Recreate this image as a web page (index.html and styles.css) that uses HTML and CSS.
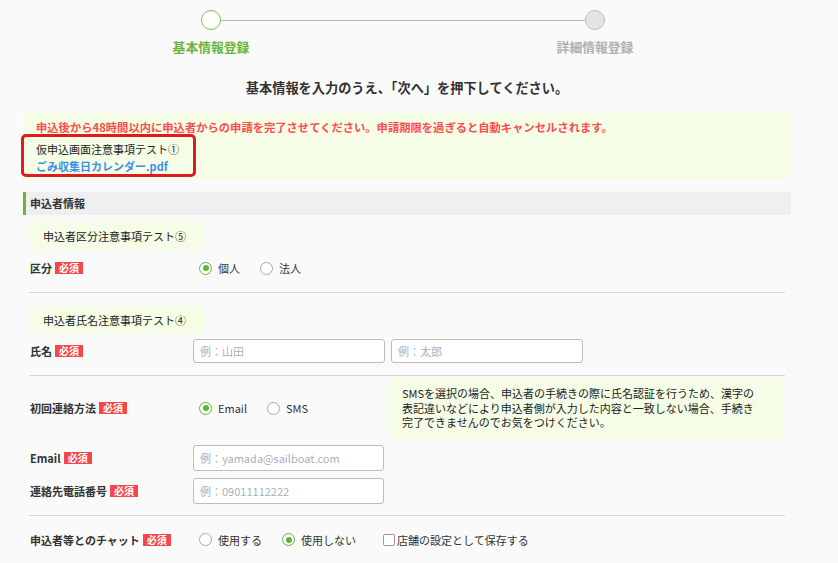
FILE: index.html
```html
<!DOCTYPE html>
<html lang="ja">
<head>
<meta charset="utf-8">
<link rel="stylesheet" href="styles.css">
</head>
<body>
<div class="page">
  <div class="stepper">
    <div class="track">
      <span class="dot dot-active"></span>
      <span class="track-line"></span>
      <span class="dot dot-off"></span>
    </div>
    <div class="step-labels">
      <span class="step-label active">基本情報登録</span>
      <span class="step-label">詳細情報登録</span>
    </div>
  </div>

  <h1 class="title">基本情報を入力のうえ、「次へ」を押下してください。</h1>

  <div class="notice">
    <p class="warn">申込後から48時間以内に申込者からの申請を完了させてください。申請期限を過ぎると自動キャンセルされます。</p>
    <p class="note-line">仮申込画面注意事項テスト①</p>
    <p class="note-line"><a class="link" href="#">ごみ収集日カレンダー.pdf</a></p>
    <span class="highlight"></span>
  </div>

  <div class="section-head">申込者情報</div>

  <div class="sub-notice">申込者区分注意事項テスト⑤</div>
  <div class="row row-kubun">
    <div class="label">区分<span class="req">必須</span></div>
    <div class="controls">
      <label class="opt"><span class="radio on"></span>個人</label>
      <label class="opt"><span class="radio"></span>法人</label>
    </div>
  </div>
  <div class="divider d1"></div>

  <div class="sub-notice sn2">申込者氏名注意事項テスト④</div>
  <div class="row row-name">
    <div class="label">氏名<span class="req">必須</span></div>
    <div class="controls">
      <div class="input">例：山田</div>
      <div class="input">例：太郎</div>
    </div>
  </div>
  <div class="divider d2"></div>

  <div class="row row-contact">
    <div class="label">初回連絡方法<span class="req">必須</span></div>
    <div class="controls">
      <label class="opt"><span class="radio on"></span>Email</label>
      <label class="opt"><span class="radio"></span>SMS</label>
      <div class="sms-note">SMSを選択の場合、申込者の手続きの際に氏名認証を行うため、漢字の表記違いなどにより申込者側が入力した内容と一致しない場合、手続き完了できませんのでお気をつけください。</div>
    </div>
  </div>
  <div class="row row-email">
    <div class="label">Email<span class="req">必須</span></div>
    <div class="controls">
      <div class="input input-tall">例：yamada@sailboat.com</div>
    </div>
  </div>
  <div class="row row-tel">
    <div class="label">連絡先電話番号<span class="req">必須</span></div>
    <div class="controls">
      <div class="input input-tall">例：09011112222</div>
    </div>
  </div>
  <div class="divider d3"></div>

  <div class="row row-chat">
    <div class="label label-chat">申込者等とのチャット<span class="req">必須</span></div>
    <div class="controls">
      <label class="opt"><span class="radio"></span>使用する</label>
      <label class="opt"><span class="radio on"></span>使用しない</label>
      <label class="opt chk-opt"><span class="checkbox"></span>店舗の設定として保存する</label>
    </div>
  </div>
</div>
</body>
</html>
```

FILE: styles.css
```css
* { box-sizing: border-box; }
html, body {
  margin: 0;
  padding: 0;
  background: #fafafa;
}
body {
  font-family: "Noto Sans CJK JP", "Noto Sans", sans-serif;
  font-size: 11px;
  color: #333;
  width: 838px;
  height: 563px;
  overflow: hidden;
}
p { margin: 0; }

.page {
  margin-left: 23px;
  width: 768px;
}

/* stepper */
.stepper { padding-top: 10px; }
.track {
  display: flex;
  align-items: center;
  margin-left: 178px;
  height: 20px;
}
.dot {
  width: 20px;
  height: 20px;
  border-radius: 50%;
  flex: none;
}
.dot-active { background: #fff; border: 1.5px solid #7cc34c; }
.dot-off { background: #e4e4e4; border: 1.5px solid #bdbdbd; }
.track-line {
  width: 364px;
  height: 1px;
  background: #b5b5b5;
  flex: none;
}
.step-labels {
  display: flex;
  margin-left: 138px;
  margin-top: 9px;
  gap: 284px;
}
.step-label {
  width: 100px;
  text-align: center;
  font-size: 12.8px;
  font-weight: bold;
  line-height: 16px;
  color: #b0b0b0;
}
.step-label.active { color: #6cb43a; }

.title {
  margin: 24px 0 0;
  font-size: 13.2px;
  line-height: 18px;
  font-weight: bold;
  text-align: center;
  color: #333;
}

/* notice */
.notice {
  position: relative;
  margin-top: 16px;
  background: #f5fde6;
  padding: 6px 13px 4px;
}
.warn {
  color: #fb4d4d;
  font-weight: bold;
  line-height: 16px;
  font-size: 11.3px;
}
.note-line {
  line-height: 17px;
  color: #222;
}
.warn + .note-line { margin-top: 6px; }
.link {
  color: #3d8fe3;
  text-decoration: none;
  font-weight: bold;
}
.highlight {
  position: absolute;
  left: -2px;
  top: 21px;
  width: 175px;
  height: 43px;
  border: 3px solid #e21a1c;
  border-radius: 5px;
}

.section-head {
  margin-top: 13px;
  height: 23px;
  line-height: 23px;
  background: #efefef;
  border-left: 3px solid #6cb43a;
  padding-left: 4px;
  font-weight: bold;
  color: #333;
}

.sub-notice {
  display: inline-block;
  margin: 7px 0 0 6px;
  height: 28px;
  line-height: 28px;
  padding: 0 17px 0 14px;
  background: #f5fde6;
  color: #222;
}
.sn2 { margin-top: 13px; }

.row {
  display: flex;
  align-items: center;
  margin: 0 6px;
}
.label {
  width: 164px;
  flex: none;
  padding-left: 1px;
  font-weight: bold;
  display: flex;
  align-items: center;
  color: #333;
}
.req {
  display: inline-block;
  margin-left: 3px;
  background: #f5474b;
  color: #fff;
  font-size: 10px;
  font-weight: bold;
  line-height: 12px;
  height: 12px;
  padding: 0 4px;
}
.controls {
  display: flex;
  align-items: center;
}

.opt {
  display: inline-flex;
  align-items: center;
  margin-right: 20px;
  color: #333;
  line-height: 16px;
}
.controls > .opt:first-child { margin-left: 6px; }
.radio {
  width: 13px;
  height: 13px;
  border-radius: 50%;
  border: 1px solid #a8a8a8;
  background: #fff;
  margin-right: 6px;
  position: relative;
  flex: none;
}
.radio.on { border-color: #5fb53b; }
.radio.on::after {
  content: "";
  position: absolute;
  left: 2.5px;
  top: 2.5px;
  width: 6px;
  height: 6px;
  border-radius: 50%;
  background: #5fb53b;
}
.checkbox {
  width: 12px;
  height: 12px;
  border: 1px solid #999;
  border-radius: 2px;
  background: #fff;
  margin-right: 2px;
  flex: none;
}
.chk-opt { margin-left: 7px; }

.divider {
  height: 1px;
  background: #d6d6d6;
  margin: 0 6px;
}

.row-kubun { height: 36px; }
.d1 { margin-top: 6px; }

.row-name { margin-top: 5px; }
.input {
  width: 192px;
  height: 24px;
  line-height: 22px;
  border: 1px solid #bcbcbc;
  border-radius: 3px;
  background: #fff;
  color: #aab0b8;
  padding-left: 6px;
  margin-right: 6px;
}
.input-tall { width: 191px; height: 26px; line-height: 24px; }
.d2 { margin-top: 12px; }

.row-contact { margin-top: 2px; }
.sms-note {
  width: 394px;
  margin-left: 81px;
  background: #f5fde6;
  padding: 8px 19px 9px 13px;
  line-height: 14.5px;
  color: #222;
}
.row-contact .opt:nth-child(2) { margin-right: 0; }

.row-email { margin-top: 6px; }
.row-tel { margin-top: 7px; }
.d3 { margin-top: 11px; }

.row-chat { margin-top: 9px; height: 30px; }
```
